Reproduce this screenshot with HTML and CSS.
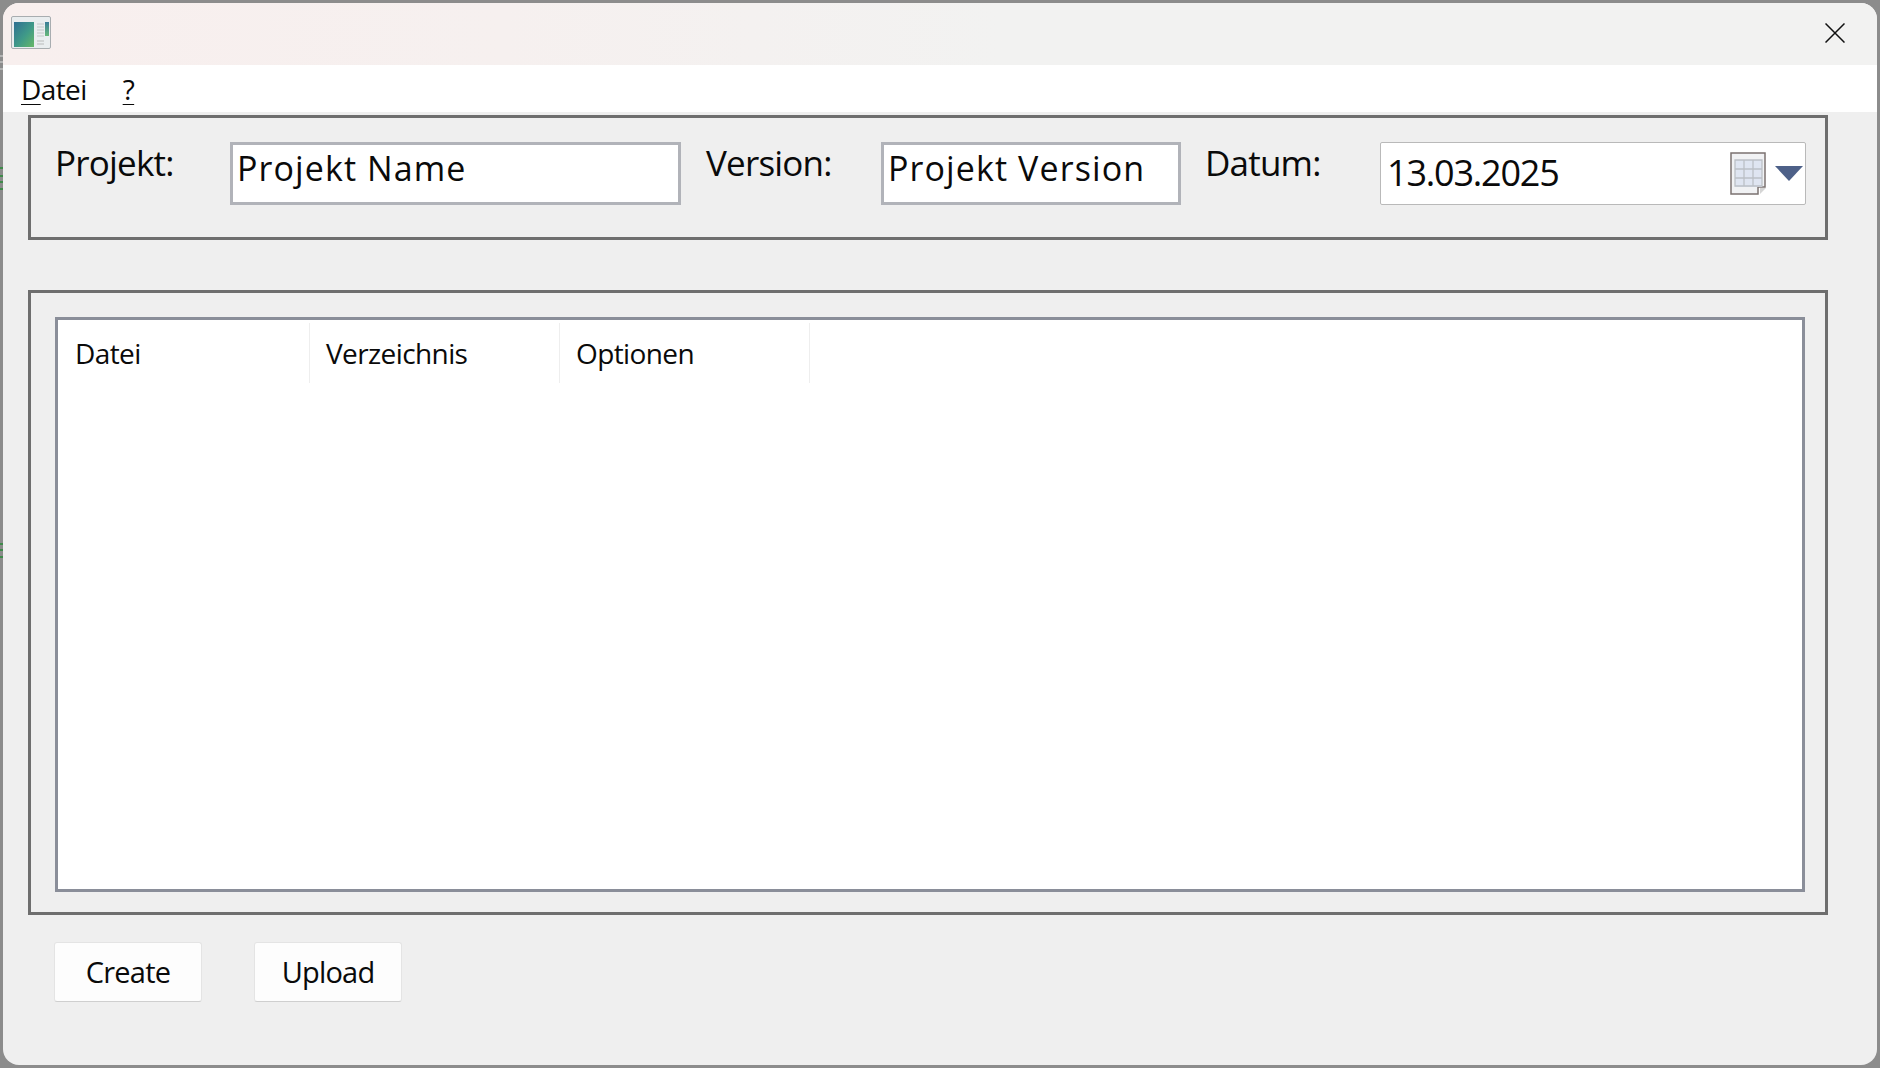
FILE: index.html
```html
<!DOCTYPE html>
<html lang="de">
<head>
<meta charset="utf-8">
<title>Projekt</title>
<link rel="stylesheet" href="styles.css">
</head>
<body>
<div class="window">
  <header class="titlebar">
    <svg class="app-icon" width="40" height="34" viewBox="0 0 40 34">
      <defs>
        <linearGradient id="pane" x1="0" y1="0" x2="1" y2="1">
          <stop offset="0" stop-color="#2f6f93"/>
          <stop offset="0.55" stop-color="#3f9a88"/>
          <stop offset="1" stop-color="#66b866"/>
        </linearGradient>
        <linearGradient id="strip" x1="0" y1="0" x2="0" y2="1">
          <stop offset="0" stop-color="#3a7d98"/>
          <stop offset="1" stop-color="#66b87a"/>
        </linearGradient>
      </defs>
      <rect x="0.5" y="0.5" width="39" height="32" rx="1.5" fill="#e9edef" stroke="#a8adb0"/>
      <rect x="3" y="6" width="20" height="25" fill="url(#pane)"/>
      <path d="M26 8h7M26 11h7M26 14h7M26 17h7M26 20h7" stroke="#c3c7c9" stroke-width="1"/>
      <path d="M26 25h7M26 28h7" stroke="#c9cccd" stroke-width="1.5"/>
      <rect x="34" y="6" width="4" height="14" fill="url(#strip)"/>
    </svg>
    <svg class="close-icon" width="20" height="20" viewBox="0 0 20 20">
      <path d="M0.5 0.5L19.5 19.5M19.5 0.5L0.5 19.5" stroke="#111" stroke-width="1.5" fill="none"/>
    </svg>
  </header>
  <nav class="menubar">
    <span class="menu-item"><u>D</u>atei</span>
    <span class="menu-item"><u>?</u></span>
  </nav>
  <main class="content">
    <section class="panel panel-form">
      <label class="form-label">Projekt:</label>
      <div class="field field-name">Projekt Name</div>
      <label class="form-label">Version:</label>
      <div class="field field-version">Projekt Version</div>
      <label class="form-label">Datum:</label>
      <div class="date-picker">
        <span class="date-value">13.03.2025</span>
        <svg class="calendar-icon" width="38" height="44" viewBox="0 0 38 44">
          <path d="M1 1h34v34h-7v7H1z" fill="#f1f2f4" stroke="#7b7270" stroke-width="1.5"/>
          <path d="M30 36v6l6-6z" fill="#d5d5d5"/>
          <rect x="5" y="8" width="27" height="27" fill="#dfe5f1"/>
          <path d="M5 8h27v26H5zM14 8v26M23 8v26M5 17h27M5 26h27" fill="none" stroke="#bcc0c6" stroke-width="1.3"/>
        </svg>
        <svg class="arrow-icon" width="28" height="15" viewBox="0 0 28 15">
          <path d="M0 0h28L14 15z" fill="#4d6088"/>
        </svg>
      </div>
    </section>
    <section class="panel panel-table">
      <div class="table">
        <div class="table-head">
          <div class="th">Datei</div>
          <div class="th">Verzeichnis</div>
          <div class="th">Optionen</div>
        </div>
      </div>
    </section>
    <div class="actions">
      <button class="btn" type="button">Create</button>
      <button class="btn" type="button">Upload</button>
    </div>
  </main>
</div>
</body>
</html>
```
FILE: styles.css
```css
* { box-sizing: border-box; }
html, body { margin: 0; padding: 0; }
body {
  width: 1880px;
  height: 1068px;
  overflow: hidden;
  background-color: #8c8c8c;
  /* desktop showing through at the window's left edge */
  background-image:
    linear-gradient(#3f8a4a, #3f8a4a), linear-gradient(#3f8a4a, #3f8a4a),
    linear-gradient(#3f8a4a, #3f8a4a), linear-gradient(#3f8a4a, #3f8a4a),
    linear-gradient(#3f8a4a, #3f8a4a), linear-gradient(#3f8a4a, #3f8a4a),
    linear-gradient(#3f8a4a, #3f8a4a),
    linear-gradient(#b4b4b4, #b4b4b4), linear-gradient(#b4b4b4, #b4b4b4),
    linear-gradient(#b4b4b4, #b4b4b4);
  background-repeat: no-repeat;
  background-size: 3px 2px;
  background-position:
    0 167px, 0 175px, 0 181px, 0 188px,
    0 543px, 0 549px, 0 556px,
    0 55px, 0 61px, 0 68px;
  font-family: "Open Sans", "Noto Sans", sans-serif;
  color: #0a0a0a;
}
.window {
  width: 1874px;
  height: 1062px;
  margin: 3px;
  border-radius: 16px;
  background: #efefef;
  overflow: hidden;
  display: flex;
  flex-direction: column;
}
.titlebar {
  height: 62px;
  flex: none;
  display: flex;
  align-items: center;
  justify-content: space-between;
  padding: 0 32px 2px 8px;
  background: linear-gradient(90deg, #f8efee 0, #f6f0ef 500px, #f2f2f1 1000px, #f2f2f1 100%);
}
.menubar {
  height: 47px;
  flex: none;
  background: #fff;
  display: flex;
  align-items: center;
  gap: 36px;
  padding-left: 18px;
  font-size: 28px;
  letter-spacing: -0.6px;
}
.menu-item u { text-underline-offset: 4px; text-decoration-thickness: 1px; }
.content {
  flex: 1;
  display: flex;
  flex-direction: column;
  padding: 3px 49px 0 25px;
}
.panel {
  border: 3px solid #6e6e6e;
}
.panel-form {
  height: 125px;
  display: flex;
  align-items: flex-start;
  padding: 24px 0 0 24px;
}
.form-label {
  width: 175px;
  flex: none;
  margin-top: 1px;
  font-size: 35px;
  line-height: 40px;
  letter-spacing: -0.8px;
}
.field {
  height: 63px;
  flex: none;
  background: #fff;
  border: 3px solid #b1b3b9;
  padding: 0 4px;
  font-size: 34px;
  line-height: 46px;
  letter-spacing: 1.1px;
}
.field-name { width: 451px; margin-right: 25px; }
.field-version { width: 300px; margin-right: 24px; }
.date-picker {
  width: 426px;
  height: 63px;
  flex: none;
  background: #fff;
  border: 1px solid #b9b9b9;
  border-radius: 2px;
  display: flex;
  align-items: center;
  padding: 0 0 2px 6px;
}
.date-value {
  flex: 1;
  font-size: 36px;
  letter-spacing: -1.2px;
}
.calendar-icon { margin-right: 7px; margin-top: 2px; }
.arrow-icon { margin-right: 2px; margin-top: 1px; }
.panel-table {
  height: 625px;
  margin-top: 50px;
  padding: 24px 20px 20px 24px;
}
.table {
  height: 100%;
  background: #fff;
  border: 3px solid #8a8e99;
}
.table-head {
  display: flex;
  padding-top: 3px;
}
.th {
  width: 250px;
  height: 60px;
  padding-left: 16px;
  border-right: 1px solid #eeeeee;
  font-size: 28px;
  line-height: 60px;
  letter-spacing: -0.6px;
}
.th:first-child {
  width: 252px;
  padding-left: 17px;
}
.actions {
  display: flex;
  gap: 52px;
  padding: 27px 0 0 26px;
}
.btn {
  width: 148px;
  height: 60px;
  background: #fdfdfd;
  border: 1px solid #e4e4e4;
  border-bottom-color: #cfcfcf;
  border-radius: 3px;
  font-family: inherit;
  font-size: 29px;
  letter-spacing: -0.8px;
  color: #0a0a0a;
  padding: 0 0 2px;
}
```
